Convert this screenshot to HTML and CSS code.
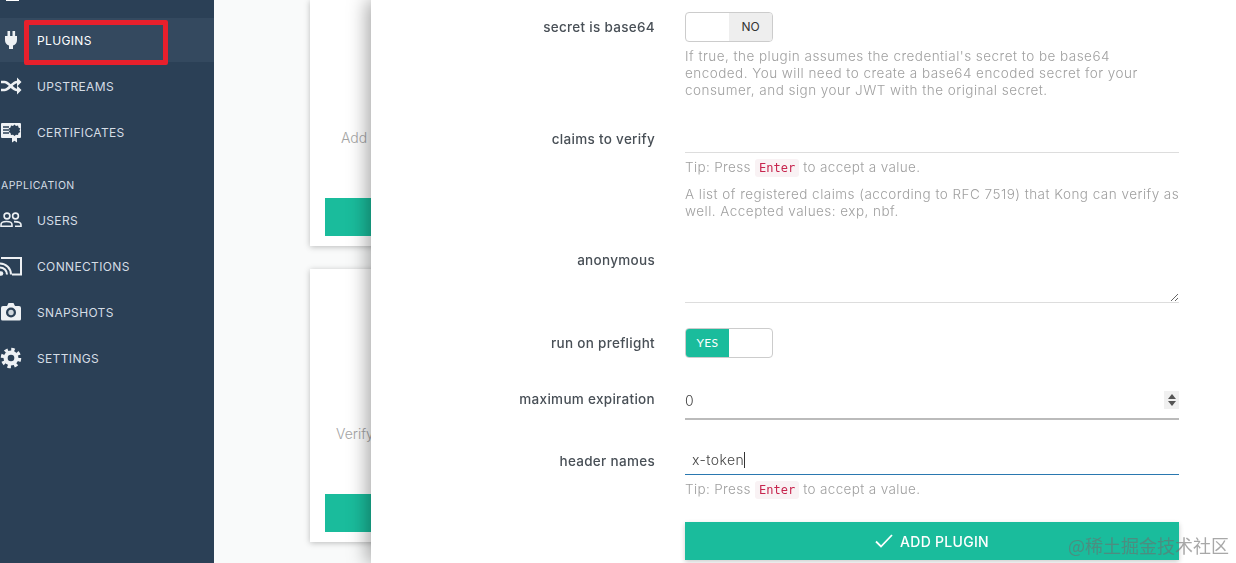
FILE: index.html
```html
<!DOCTYPE html>
<html lang="en">
<head>
    <meta charset="UTF-8">
    <meta name="viewport" content="width=device-width, initial-scale=1.0">
    <title>Add plugin - Konga</title>
    <link rel="stylesheet" href="styles.css">
</head>
<body>
    <aside class="sidebar">
        <nav class="nav">
            <a class="nav-item">
                <svg class="nav-icon" viewBox="0 0 22 22"><rect x="6" y="12" width="13" height="6" fill="#fff"/></svg>
            </a>
            <a class="nav-item active">
                <svg class="nav-icon" viewBox="0 0 22 22"><path d="M7.500 2h2.600v6H7.500zM12.500 2h2.600v6h-2.600z"/><path d="M5 7h12v4a6 6 0 0 1-4 5.600V20H9v-3.400A6 6 0 0 1 5 11z"/></svg>
                <span>PLUGINS</span>
            </a>
            <a class="nav-item">
                <svg class="nav-icon" viewBox="0 0 22 22"><path class="line" d="M1 7h3.500c4.500 0 8 8 12.500 8h1M1 15h3.500c4.500 0 8-8 12.500-8h1" stroke-width="2.600"/><path d="M17 2.500l4.500 4.500-4.500 4.500zM17 10.500l4.500 4.500-4.500 4.500z"/></svg>
                <span>UPSTREAMS</span>
            </a>
            <a class="nav-item">
                <svg class="nav-icon" viewBox="0 0 22 22"><rect x="1" y="2" width="20" height="15" rx="1"/><path class="cut" d="M3 6h6M3 9h6M3 12h6" stroke-width="1.600"/><path class="dark" d="M14.500 3.500l1.500 1.400 2-.4.500 2 1.800 1-.9 1.800.9 1.800-1.800 1-.5 2-2-.4-1.500 1.400-1.500-1.400-2 .4-.5-2-1.800-1 .9-1.800-.9-1.800 1.800-1 .5-2 2 .4z"/><path d="M12 15v6.500l2.500-1.700 2.500 1.700V15z"/></svg>
                <span>CERTIFICATES</span>
            </a>
            <div class="nav-heading">APPLICATION</div>
            <a class="nav-item">
                <svg class="nav-icon" viewBox="0 0 22 22"><g class="line" stroke-width="1.600"><circle cx="7" cy="7" r="2.900"/><circle cx="15.500" cy="7" r="2.900"/><path d="M1 17.200v-1.500c0-2.300 2.600-3.200 5.500-3.200s5.500.9 5.500 3.200v1.500zM14 12.600c4 0 7 .8 7 3.100v1.500h-6"/></g></svg>
                <span>USERS</span>
            </a>
            <a class="nav-item">
                <svg class="nav-icon" viewBox="0 0 22 22"><g class="line"><path d="M1 3h20v16.500h-9" stroke-width="2"/><path d="M0 8.500a11 11 0 0 1 11 11M0 12.500a7 7 0 0 1 7 7" stroke-width="2"/></g><circle cx="1" cy="18.500" r="2.300"/></svg>
                <span>CONNECTIONS</span>
            </a>
            <a class="nav-item">
                <svg class="nav-icon" viewBox="0 0 22 22"><path d="M3 5h4l1.500-3h5L15 5h4a2 2 0 0 1 2 2v11a1.500 1.500 0 0 1-1.500 1.500h-17A1.500 1.500 0 0 1 1 18V7a2 2 0 0 1 2-2z"/><circle class="dark" cx="11" cy="11.500" r="5"/><circle cx="11" cy="11.500" r="2.700" fill="#cfd6dc"/></svg>
                <span>SNAPSHOTS</span>
            </a>
            <a class="nav-item">
                <svg class="nav-icon" viewBox="0 0 22 22"><circle class="line" cx="11" cy="11" r="8.500" stroke-width="3.500" stroke-dasharray="3.400 3.270"/><circle cx="11" cy="11" r="7.500"/><circle class="dark" cx="11" cy="11" r="3.300"/></svg>
                <span>SETTINGS</span>
            </a>
        </nav>
        <div class="nav-highlight"></div>
    </aside>

    <main class="content">
        <div class="plugin-card">
            <p class="plugin-desc plugin-desc-add">Add plugin</p>
            <div class="plugin-btn"></div>
        </div>
        <div class="plugin-card plugin-card-second">
            <p class="plugin-desc plugin-desc-verify">Verify token</p>
            <div class="plugin-btn"></div>
        </div>
    </main>

    <section class="panel">
        <div class="field">
            <label class="field-label">secret is base64</label>
            <div class="field-body">
                <div class="toggle"><span class="toggle-blank"></span><span class="toggle-no">NO</span></div>
                <p class="help help-first">If true, the plugin assumes the credential's secret to be base64<br>encoded. You will need to create a base64 encoded secret for your<br>consumer, and sign your JWT with the original secret.</p>
            </div>
        </div>
        <div class="field">
            <label class="field-label">claims to verify</label>
            <div class="field-body">
                <input class="input" type="text">
                <p class="help help-first tip">Tip: Press <code>Enter</code> to accept a value.</p>
                <p class="help help-second">A list of registered claims (according to RFC 7519) that Kong can verify as<br>well. Accepted values: exp, nbf.</p>
            </div>
        </div>
        <div class="field">
            <label class="field-label">anonymous</label>
            <div class="field-body">
                <textarea class="input input-area"></textarea>
            </div>
        </div>
        <div class="field">
            <label class="field-label">run on preflight</label>
            <div class="field-body">
                <div class="toggle"><span class="toggle-yes">YES</span><span class="toggle-blank"></span></div>
            </div>
        </div>
        <div class="field field-number">
            <label class="field-label">maximum expiration</label>
            <div class="field-body number-wrap">
                <input class="input input-number" type="number" value="0">
                <span class="spin"><i class="spin-up"></i><i class="spin-down"></i></span>
            </div>
        </div>
        <div class="field field-names">
            <label class="field-label">header names</label>
            <div class="field-body">
                <div class="input input-focus">x-token<span class="caret"></span></div>
                <p class="help help-first tip">Tip: Press <code>Enter</code> to accept a value.</p>
            </div>
        </div>
        <div class="field field-submit">
            <div class="field-label"></div>
            <div class="field-body">
                <button class="submit">
                    <svg class="check" viewBox="0 0 18 14"><path d="M1 7.500l5 5L17 1"/></svg>
                    ADD PLUGIN
                </button>
            </div>
        </div>
    </section>

    <div class="watermark">@稀土掘金技术社区</div>
</body>
</html>
```

FILE: styles.css
```css
* {
    box-sizing: border-box;
}
html, body {
    height: 100%;
}
body {
    margin: 0;
    display: flex;
    overflow: hidden;
    font-family: Inter, "Open Sans", sans-serif;
    background-color: #f9fafa;
    color: #444;
}

/* sidebar */
.sidebar {
    position: relative;
    flex: 0 0 214px;
    background-color: #2b4056;
    overflow: hidden;
}
.nav {
    margin-top: -28px;
}
.nav-item {
    display: flex;
    align-items: center;
    gap: 15px;
    height: 44px;
    margin-bottom: 2px;
    font-size: 12px;
    letter-spacing: 0.35px;
    color: #d5dde5;
}
.nav-item.active {
    background-color: #34495f;
    color: #fff;
}
.nav-icon {
    flex: 0 0 22px;
    width: 22px;
    height: 22px;
    fill: #eef1f4;
}
.nav-icon .line {
    fill: none;
    stroke: #eef1f4;
}
.nav-icon .cut {
    fill: none;
    stroke: #2b4056;
}
.nav-icon .dark {
    fill: #2b4056;
}
.nav-heading {
    padding: 21px 0 4px 1px;
    line-height: 17px;
    font-size: 10.5px;
    letter-spacing: 0.45px;
    color: #d5dde5;
}
.nav-highlight {
    position: absolute;
    left: 24px;
    top: 20px;
    width: 144px;
    height: 45px;
    border: 5px solid #e8202c;
    border-radius: 2px;
}

/* cards behind the panel */
.content {
    flex: 1;
    padding-left: 96px;
}
.plugin-card {
    position: relative;
    width: 280px;
    height: 246px;
    background-color: #fff;
    box-shadow: 0 1px 6px rgba(0,0,0,0.25);
}
.plugin-card-second {
    height: 273px;
    margin-top: 23px;
}
.plugin-desc {
    position: absolute;
    margin: 0;
    font-size: 14px;
    font-weight: 300;
    color: #a5a5a5;
}
.plugin-desc-add {
    left: 31px;
    top: 129px;
}
.plugin-desc-verify {
    left: 26px;
    top: 156px;
}
.plugin-btn {
    position: absolute;
    left: 15px;
    right: 15px;
    bottom: 10px;
    height: 38px;
    background-color: #1abc9c;
}

/* drawer */
.panel {
    position: fixed;
    top: 0;
    right: 0;
    bottom: 0;
    left: 371px;
    padding: 12px 57px 0 0;
    background-color: #fff;
    box-shadow: -4px 0 18px rgba(0,0,0,0.35);
    overflow: hidden;
}
.field {
    display: grid;
    grid-template-columns: 284px 494px;
    column-gap: 30px;
    margin-bottom: 25px;
}
.field-number {
    margin-bottom: 26px;
}
.field-names {
    margin-bottom: 23px;
}
.field-submit {
    margin-bottom: 0;
}
.field-label {
    padding-top: 5px;
    line-height: 20px;
    font-size: 13.5px;
    font-weight: 500;
    letter-spacing: 0.3px;
    text-align: right;
    color: #484f56;
}
.field-number .field-label {
    padding-top: 6px;
}
.help {
    margin: 0;
    font-size: 13.5px;
    font-weight: 300;
    letter-spacing: 0.47px;
    line-height: 17px;
    color: #a0a0a0;
    white-space: nowrap;
}
.help.tip {
    letter-spacing: 0.35px;
}
.help-first {
    margin-top: 6px;
}
.help-second {
    margin-top: 9px;
}
code {
    padding: 2px 4px;
    font-family: "DejaVu Sans Mono", monospace;
    font-size: 12px;
    font-weight: 500;
    letter-spacing: 0;
    color: #c7254e;
    background-color: #f9f2f4;
    border-radius: 3px;
}

/* inputs */
.input {
    display: block;
    width: 100%;
    height: 29px;
    padding: 0 7px;
    border: 0;
    border-bottom: 1px solid #ddd;
    outline: none;
    font-family: inherit;
    font-size: 14px;
    font-weight: 300;
    letter-spacing: 0.4px;
    line-height: 28px;
    color: #444;
    background: transparent;
}
.input-area {
    height: 58px;
    border-radius: 0;
}
.number-wrap {
    position: relative;
}
.input-number {
    height: 37px;
    padding: 0;
    border-bottom: 2px solid #bbb;
    appearance: textfield;
}
.input-number::-webkit-inner-spin-button {
    appearance: none;
}
.spin {
    position: absolute;
    top: 8px;
    right: 0;
    display: flex;
    flex-direction: column;
    align-items: center;
    justify-content: center;
    gap: 2px;
    width: 15px;
    height: 18px;
    background-color: #f0f0f0;
}
.spin i {
    width: 0;
    height: 0;
    border-left: 4px solid transparent;
    border-right: 4px solid transparent;
}
.spin-up {
    border-bottom: 5px solid #555;
}
.spin-down {
    border-top: 5px solid #555;
}
.input-focus {
    border-bottom-color: #2a78b0;
}
.caret {
    display: inline-block;
    width: 1px;
    height: 16px;
    vertical-align: -3px;
    background-color: #333;
}

/* switch */
.toggle {
    display: flex;
    width: 88px;
    height: 30px;
    border: 1px solid #ccc;
    border-radius: 4px;
    overflow: hidden;
    font-size: 12px;
    line-height: 28px;
    text-align: center;
}
.toggle span {
    flex: 1;
}
.toggle-no {
    background-color: #eee;
    color: #333;
}
.toggle-yes {
    background-color: #1abc9c;
    color: #fff;
    font-family: Lato, sans-serif;
    letter-spacing: 0.3px;
}

/* submit */
.submit {
    display: flex;
    align-items: center;
    justify-content: center;
    gap: 7px;
    width: 100%;
    height: 38px;
    border: 0;
    font-family: inherit;
    font-size: 14px;
    font-weight: 500;
    letter-spacing: 0.3px;
    color: #fff;
    background-color: #1abc9c;
    box-shadow: 0 2px 5px rgba(0,0,0,0.2);
}
.check {
    width: 18px;
    height: 14px;
    fill: none;
    stroke: #fff;
    stroke-width: 1.8;
}

.watermark {
    position: fixed;
    right: 7px;
    bottom: 6px;
    font-family: "Noto Sans CJK SC", sans-serif;
    font-size: 18px;
    line-height: 24px;
    color: rgba(110,110,110,0.6);
}
```
